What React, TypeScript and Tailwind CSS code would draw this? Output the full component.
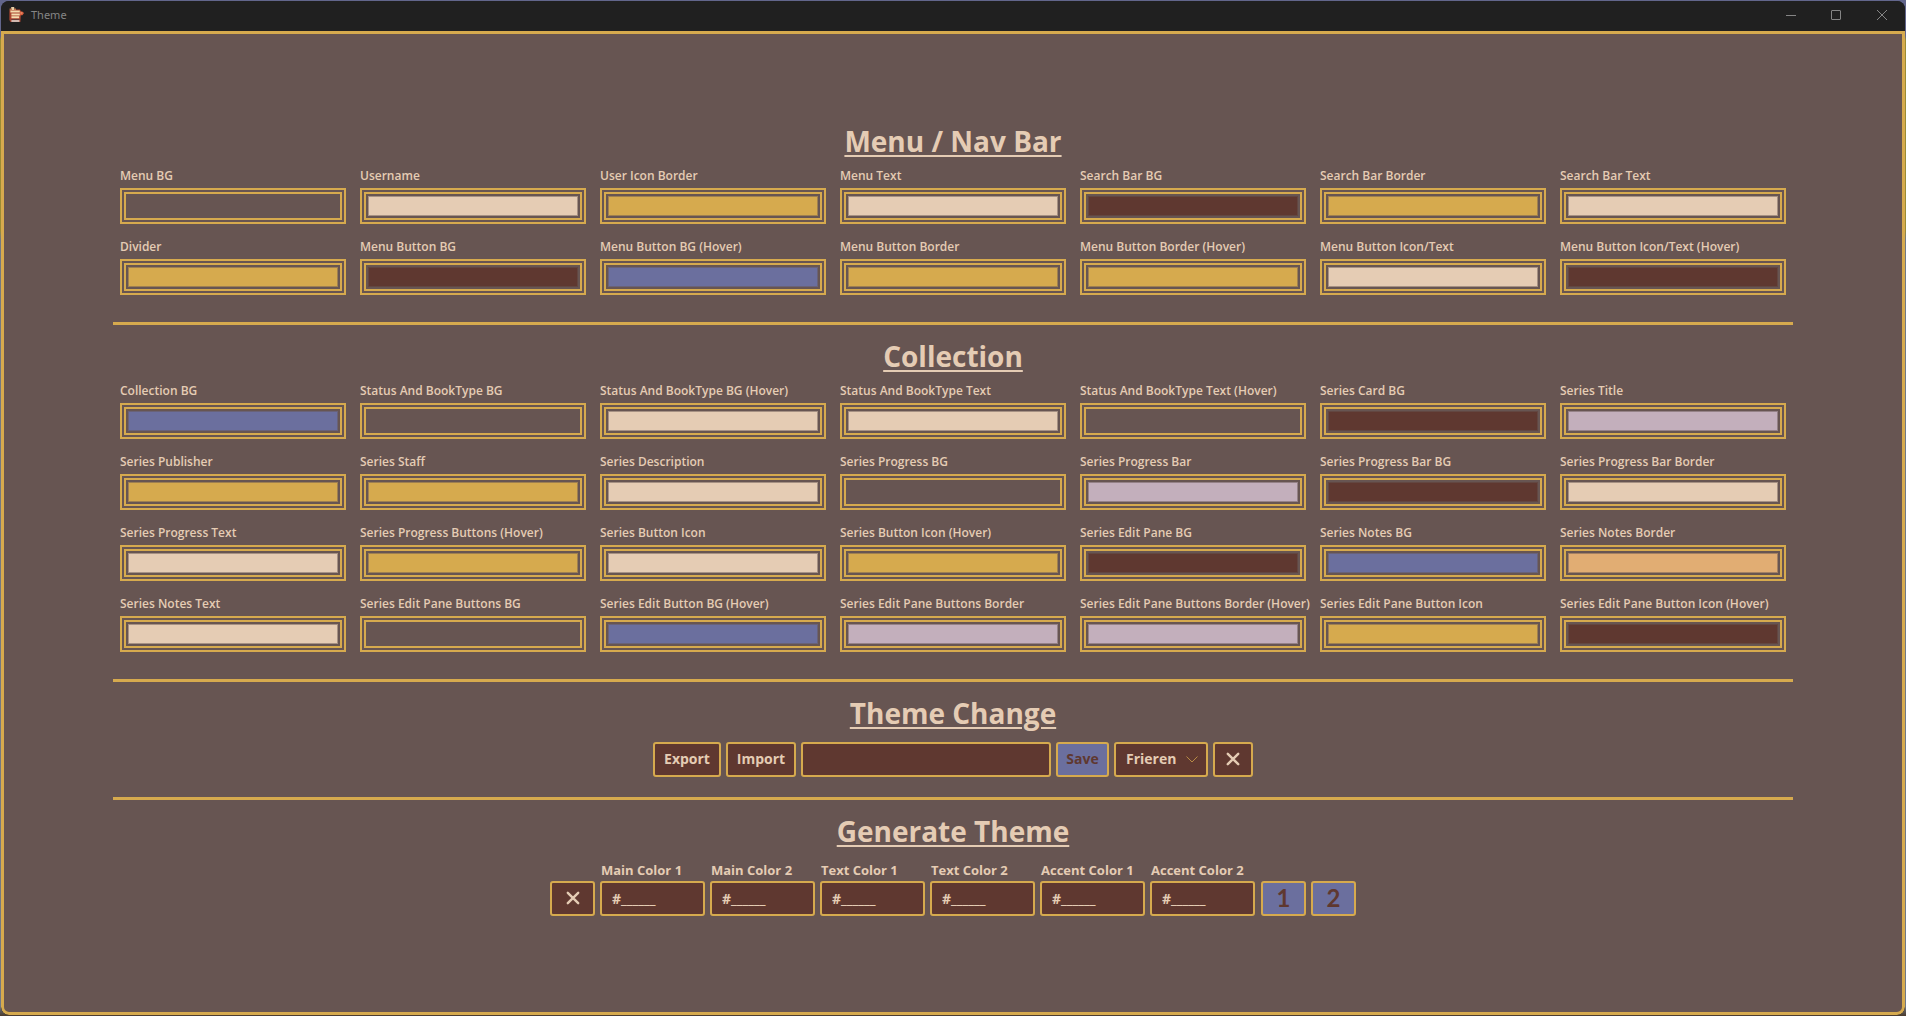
import { useState } from "react";

type Swatch = [label: string, color: string];

const BG = "#675552";
const GOLD = "#d6aa4e";
const CREAM = "#e5ccb4";
const BROWN = "#5f3830";
const BLUE = "#6b6f9e";
const LILAC = "#c3afbc";
const ORANGE = "#e1ad73";

const menuSwatches: Swatch[] = [
  ["Menu BG", BG],
  ["Username", CREAM],
  ["User Icon Border", GOLD],
  ["Menu Text", CREAM],
  ["Search Bar BG", BROWN],
  ["Search Bar Border", GOLD],
  ["Search Bar Text", CREAM],
  ["Divider", GOLD],
  ["Menu Button BG", BROWN],
  ["Menu Button BG (Hover)", BLUE],
  ["Menu Button Border", GOLD],
  ["Menu Button Border (Hover)", GOLD],
  ["Menu Button Icon/Text", CREAM],
  ["Menu Button Icon/Text (Hover)", BROWN],
];

const collectionSwatches: Swatch[] = [
  ["Collection BG", BLUE],
  ["Status And BookType BG", BG],
  ["Status And BookType BG (Hover)", CREAM],
  ["Status And BookType Text", CREAM],
  ["Status And BookType Text (Hover)", BG],
  ["Series Card BG", BROWN],
  ["Series Title", LILAC],
  ["Series Publisher", GOLD],
  ["Series Staff", GOLD],
  ["Series Description", CREAM],
  ["Series Progress BG", BG],
  ["Series Progress Bar", LILAC],
  ["Series Progress Bar BG", BROWN],
  ["Series Progress Bar Border", CREAM],
  ["Series Progress Text", CREAM],
  ["Series Progress Buttons (Hover)", GOLD],
  ["Series Button Icon", CREAM],
  ["Series Button Icon (Hover)", GOLD],
  ["Series Edit Pane BG", BROWN],
  ["Series Notes BG", BLUE],
  ["Series Notes Border", ORANGE],
  ["Series Notes Text", CREAM],
  ["Series Edit Pane Buttons BG", BG],
  ["Series Edit Button BG (Hover)", BLUE],
  ["Series Edit Pane Buttons Border", LILAC],
  ["Series Edit Pane Buttons Border (Hover)", LILAC],
  ["Series Edit Pane Button Icon", GOLD],
  ["Series Edit Pane Button Icon (Hover)", BROWN],
];

const generatorFields = [
  "Main Color 1",
  "Main Color 2",
  "Text Color 1",
  "Text Color 2",
  "Accent Color 1",
  "Accent Color 2",
];

function AppIcon() {
  return (
    <svg viewBox="0 0 16 16" className="size-4" aria-hidden="true">
      <path d="M3 2.5h9l1 2-.6 10.5H2.6L1.4 13V3.6z" fill="#a8432f" />
      <path d="M3.2 0h3v3h-3z" fill="#e9cfa6" />
      <path d="M1.6 1.6h2.2v2H1.6zM6 1.4h2v1.8H6z" fill="#c2774c" />
      <path d="M2.4 3.6h9.4v2H2.4zM3.4 6.4h8.4v2H3.4zM3.4 9.2h7.8v2H3.4z" fill="#f3dcae" />
      <path d="M3.4 12h8v1H3.4z" fill="#6a3d3a" />
      <path d="M3.4 13.2h8v1.6h-8z" fill="#dfe0dc" />
      <path d="M12 4.4h2.2L16 6l-1.6 2.2H12z" fill="#d9603f" />
      <path d="M12.6 5.4h1.6v1.2h-1.6z" fill="#f0a57e" />
    </svg>
  );
}

function CrossIcon() {
  return (
    <svg viewBox="0 0 14 14" className="size-3.5" fill="none" stroke="currentColor" strokeWidth="2.4" strokeLinecap="round" aria-hidden="true">
      <path d="M1.8 1.8 12.2 12.2M12.2 1.8 1.8 12.2" />
    </svg>
  );
}

function TitleBar() {
  return (
    <header className="flex h-[30px] shrink-0 items-center justify-between bg-[#202020] pb-0.5 pl-[7px]">
      <div className="flex items-center gap-[7px]">
        <AppIcon />
        <span className="font-['Noto_Sans'] text-[11px] leading-4 text-[#858585]">Theme</span>
      </div>
      <div className="flex text-[#858585]">
        <button aria-label="Minimize" className="flex h-7 w-[45px] items-center justify-center">
          <svg viewBox="0 0 10 10" className="size-2.5" stroke="currentColor"><path d="M0 5.5h10" /></svg>
        </button>
        <button aria-label="Maximize" className="flex h-7 w-[46px] items-center justify-center">
          <svg viewBox="0 0 10 10" className="size-2.5" fill="none" stroke="currentColor"><rect x=".5" y=".5" width="9" height="9" rx=".5" /></svg>
        </button>
        <button aria-label="Close" className="flex h-7 w-[46px] items-center justify-center">
          <svg viewBox="0 0 10 10" className="size-2.5" fill="none" stroke="currentColor"><path d="M0 0l10 10M10 0L0 10" /></svg>
        </button>
      </div>
    </header>
  );
}

function Heading({ children }: { children: string }) {
  return (
    <h2 className="text-center text-[28px] leading-10 font-bold underline decoration-2 underline-offset-3">
      {children}
    </h2>
  );
}

function SwatchGrid({ items }: { items: Swatch[] }) {
  return (
    <div className="mt-[7px] grid grid-cols-7 gap-x-3.5 gap-y-[15px] px-[7px]">
      {items.map(([label, color]) => {
        const id = label.toLowerCase().replace(/[^a-z]+/g, "-");
        return (
          <div key={label} className="flex flex-col gap-1">
            <label htmlFor={id} className="text-xs leading-4 font-semibold whitespace-nowrap">
              {label}
            </label>
            <button id={id} className="h-9 border-2 border-[#d6aa4e] p-0.5">
              <span className="block h-full border-2 border-[#d6aa4e] p-0.5">
                <span className="block h-full border border-[#675552]/50" style={{ backgroundColor: color }} />
              </span>
            </button>
          </div>
        );
      })}
    </div>
  );
}

const control = "h-[35px] rounded-[3px] border-2 border-[#d6aa4e]";

export default function App() {
  const [name, setName] = useState("");
  return (
    <div className="min-h-screen bg-[linear-gradient(to_bottom,#62668c_0px,#62668c_36px,#9a8b35_40px,#9a8b35_230px,#6f7887_240px,#6f7887_1006px,#4a3a2c_1016px)] p-px font-['Open_Sans','Noto_Sans',sans-serif] text-[#e5ccb4]">
      <div className="flex min-h-[calc(100vh-2px)] flex-col overflow-hidden rounded-lg bg-[#202020]">
        <TitleBar />
        <main className="flex grow flex-col justify-center rounded-b-lg border-3 border-[#d6aa4e] bg-[#675552] px-[109px] pb-2.5">
          <section className="border-b-3 border-[#d6aa4e] pb-[27px]">
            <Heading>Menu / Nav Bar</Heading>
            <SwatchGrid items={menuSwatches} />
          </section>
          <section className="border-b-3 border-[#d6aa4e] pt-[11px] pb-[27px]">
            <Heading>Collection</Heading>
            <SwatchGrid items={collectionSwatches} />
          </section>
          <section className="border-b-3 border-[#d6aa4e] pt-[11px] pb-5">
            <Heading>Theme Change</Heading>
            <div className="mt-[9px] flex justify-center gap-[5px] text-sm leading-5 font-bold">
              <button className={`${control} w-[68px] bg-[#5f3830]`}>Export</button>
              <button className={`${control} w-[70px] bg-[#5f3830]`}>Import</button>
              <input
                aria-label="Theme name"
                value={name}
                onChange={(e) => setName(e.target.value)}
                className={`${control} w-[250px] bg-[#5f3830] px-2 outline-none`}
              />
              <button className={`${control} w-[53px] bg-[#6b6f9e] text-[#5f3830]`}>Save</button>
              <div className="relative">
                <select aria-label="Theme" className={`${control} w-[94px] appearance-none bg-[#5f3830] pl-2.5 outline-none`}>
                  <option>Frieren</option>
                </select>
                <svg viewBox="0 0 12 7" className="pointer-events-none absolute top-3.5 right-2.5 h-[7px] w-3" fill="none" stroke="#b78a45" aria-hidden="true">
                  <path d="M.5 .5 6 6 11.5 .5" />
                </svg>
              </div>
              <button aria-label="Delete theme" className={`${control} flex w-10 items-center justify-center bg-[#5f3830]`}>
                <CrossIcon />
              </button>
            </div>
          </section>
          <section className="pt-[11px]">
            <Heading>Generate Theme</Heading>
            <div className="mt-2.5 flex items-end justify-center gap-[5px]">
              <button aria-label="Clear colors" className={`${control} flex w-[45px] items-center justify-center bg-[#5f3830]`}>
                <CrossIcon />
              </button>
              {generatorFields.map((label) => {
                const id = label.toLowerCase().replace(/ /g, "-");
                return (
                  <div key={label} className="flex w-[105px] flex-col gap-0.5">
                    <label htmlFor={id} className="pl-px text-[13px] leading-[18px] font-bold whitespace-nowrap">
                      {label}
                    </label>
                    <input id={id} defaultValue="#______" className={`${control} w-full bg-[#5f3830] px-2.5 text-sm font-bold outline-none`} />
                  </div>
                );
              })}
              <div className="flex gap-[5px] pl-px">
                <button className={`${control} w-[45px] bg-[#6b6f9e] font-['Lato'] text-2xl leading-none font-bold text-[#5f3830]`}>1</button>
                <button className={`${control} w-[45px] bg-[#6b6f9e] font-['Lato'] text-2xl leading-none font-bold text-[#5f3830]`}>2</button>
              </div>
            </div>
          </section>
        </main>
      </div>
    </div>
  );
}
